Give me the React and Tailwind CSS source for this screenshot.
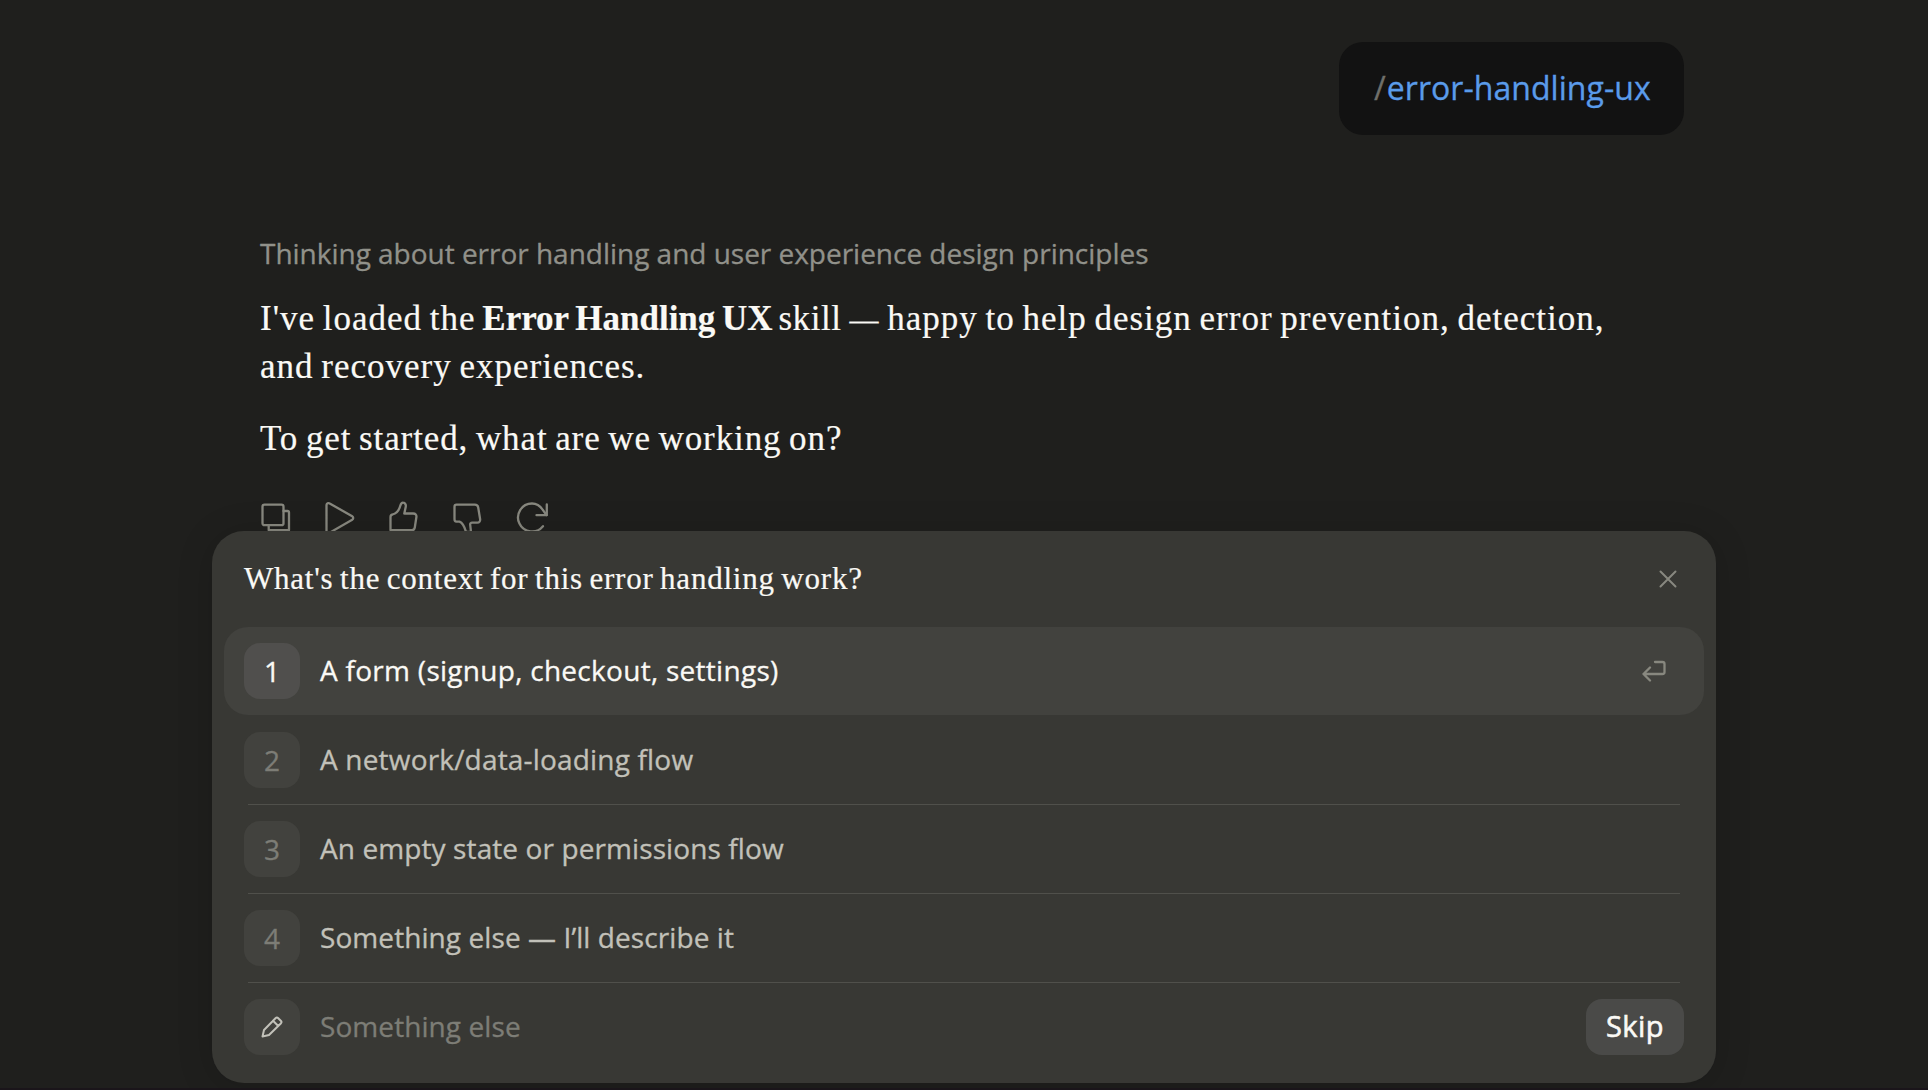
import React, { useState } from "react";
import { clsx } from "clsx";

const options = [
  { id: 1, label: "A form (signup, checkout, settings)", spacing: "tracking-[0.28px]" },
  { id: 2, label: "A network/data-loading flow", spacing: "tracking-[0.18px]" },
  { id: 3, label: "An empty state or permissions flow", spacing: "tracking-[0.1px]" },
  { id: 4, label: "Something else — I’ll describe it", spacing: "tracking-[0.08px]" },
];

const Icon = ({ size, stroke = 2.3, className, children }) => (
  <svg
    width={size}
    height={size}
    viewBox={`0 0 ${size} ${size}`}
    fill="none"
    stroke="currentColor"
    strokeWidth={stroke}
    strokeLinecap="round"
    strokeLinejoin="round"
    className={className}
  >
    {children}
  </svg>
);

const actions = [
  {
    name: "Copy",
    paths: (
      <>
        <rect x="2.5" y="4.7" width="21" height="20.5" rx="2" />
        <path d="M23.5 11h4a1.5 1.5 0 0 1 1.5 1.5V30.2H8.700V26" />
      </>
    ),
  },
  {
    name: "Play",
    paths: (
      <path d="M2.500 5.200a2 2 0 0 1 3.200-1.700l22.500 12.700a2 2 0 0 1 0 3.500l-22.500 13a2 2 0 0 1-3.200-1.700z" />
    ),
  },
  {
    name: "Like",
    paths: (
      <path d="M2.500 17c0-1.500.700-2.300 2-2.500 4-1 6.500-4.200 7.700-8.500.700-2.300 1.500-3.500 3-3.300 2 .200 3 2 2.500 4.300l-1.400 6.500h8.900c2.200 0 3.500 1.500 3.200 3.500l-1.600 10.500c-.300 1.800-1.200 2.700-3 2.700H2.500z" />
    ),
  },
  {
    name: "Dislike",
    paths: (
      <path d="M2.500 6.700c0-1.300.700-2 2-2h18.300c1.900 0 3.100 1 3.400 2.800l1.900 11.500c.300 2-.700 3.700-2.900 3.700h-5c-1.500 0-2.200.700-2 2.200l.8 7h-5c-1-3.500-2.500-8.700-6.500-10.200h-3c-1.300-.2-2-1.200-2-2.500z" />
    ),
  },
  {
    name: "Retry",
    paths: (
      <>
        <path d="M30.800 4.500V15.200H20.500" />
        <path d="M30.500 15l-3.700-5.200C24.200 6 20.500 3.500 16 3.500a14 14 0 1 0 11 22.700" />
      </>
    ),
  },
];

const Message = () => (
  <div className="px-12 font-['Liberation_Serif',serif] text-[35px] leading-12 text-[#faf9f5] [-webkit-text-stroke:0.2px] [word-spacing:-2px]">
    <p className="-mt-px font-['Open_Sans',sans-serif] text-[28px] leading-10 tracking-[-0.02px] text-[#91918a] [-webkit-text-stroke:0.3px] [word-spacing:0px]">
      Thinking about error handling and user experience design principles
    </p>
    <p className="mt-[22px] whitespace-nowrap tracking-[1px]">
      I've loaded the{" "}
      <strong className="-ml-px -mr-0.5 tracking-normal">Error Handling UX</strong>{" "}
      <span className="tracking-[0.6px]">skill</span>{" "}
      <span className="text-[29px] leading-none">—</span> happy to help design
      error prevention, detection,
      <br />
      and recovery experiences.
    </p>
    <p className="mt-6 tracking-[0.9px]">To get started, what are we working on?</p>
    <div className="mt-[37px] flex gap-8 text-[#88887f]">
      {actions.map((action) => (
        <button key={action.name} aria-label={action.name}>
          <Icon size={32}>{action.paths}</Icon>
        </button>
      ))}
    </div>
  </div>
);

const OptionRow = ({ option, active, onSelect }) => (
  <li
    className={clsx(
      "flex h-[89px] flex-col cursor-pointer",
      active ? "text-[#faf9f5]" : "text-[#c2c1b9]"
    )}
    onClick={onSelect}
  >
    <div
      className={clsx(
        "flex h-[88px] items-center rounded-3xl px-5",
        active && "bg-[#42423e]"
      )}
    >
      <span
        className={clsx(
          "flex size-14 items-center justify-center rounded-2xl pb-px text-[28px]",
          active ? "bg-[#504f4d]" : "bg-[#42423e] text-[#7d7d76]"
        )}
      >
        {option.id}
      </span>
      <span className={clsx("ml-5 pb-0.5", option.spacing)}>{option.label}</span>
      {active && (
        <Icon size={24} className="ml-auto mr-[18px] text-[#88887f]">
          <path d="M13 3h7.500a2 2 0 0 1 2 2v8a2 2 0 0 1-2 2H1.500M8 8.500 1.500 15 8 21.500" />
        </Icon>
      )}
    </div>
    {!active && <div className="mx-6 h-px bg-[#50504b]" />}
  </li>
);

const App = () => {
  const [selected, setSelected] = useState(1);

  return (
    <div className="flex h-[1090px] w-[1928px] flex-col items-center overflow-hidden border-b-2 border-[#1a151a] bg-[#1f1f1d]">
      <div className="flex h-[531px] w-[1504px] shrink-0 flex-col pt-[42px]">
        <div className="mr-8 flex h-[93px] w-[345px] shrink-0 items-center self-end rounded-3xl bg-[#121212] pb-px pl-[35px] font-['Open_Sans',sans-serif] text-[32px] [-webkit-text-stroke:0.3px]">
          <span className="text-[#6f6f6a]">/</span>
          <span className="ml-px tracking-[0.05px] text-[#5a9bea]">error-handling-ux</span>
        </div>
        <div className="mt-[99px]">
          <Message />
        </div>
      </div>

      <div className="relative h-[552px] w-[1504px] shrink-0 rounded-[32px] bg-[#383834] px-3 font-['Open_Sans',sans-serif] text-[28px] shadow-[0_4px_36px_rgba(0,0,0,0.16)] [-webkit-text-stroke:0.3px]">
        <div className="flex h-24 items-center justify-between pl-5 pr-[27px]">
          <h2 className="font-['Liberation_Serif',serif] text-[31px] tracking-[0.78px] text-[#faf9f5] [-webkit-text-stroke:0.2px] [word-spacing:-2px]">
            What's the context for this error handling work?
          </h2>
          <button aria-label="Close" className="text-[#88887f]">
            <Icon size={18} stroke={2}>
              <path d="m1.500 1.500 15 15M16.500 1.500l-15 15" />
            </Icon>
          </button>
        </div>
        <ul>
          {options.map((option) => (
            <OptionRow
              key={option.id}
              option={option}
              active={option.id === selected}
              onSelect={() => setSelected(option.id)}
            />
          ))}
        </ul>
        <div className="flex h-[88px] items-center px-5">
          <span className="flex size-14 items-center justify-center rounded-2xl bg-[#42423e] text-[#c2c1b9]">
            <Icon size={24} stroke={2}>
              <path d="M2.500 21.500l1.500-6.500L15.500 3.200a2 2 0 0 1 2.800 0l2.500 2.500a2 2 0 0 1 0 2.800L9 20zM13 5.700l5.300 5.300" />
            </Icon>
          </span>
          <span className="ml-5 pb-0.5 tracking-[0.08px] text-[#7d7d76]">Something else</span>
          <button className="ml-auto h-14 w-[98px] rounded-2xl bg-[#4a4a48] pb-0.5 text-[29px] tracking-[0.5px] text-[#faf9f5] [-webkit-text-stroke:0.6px]">
            Skip
          </button>
        </div>
      </div>
    </div>
  );
};

export default App;
